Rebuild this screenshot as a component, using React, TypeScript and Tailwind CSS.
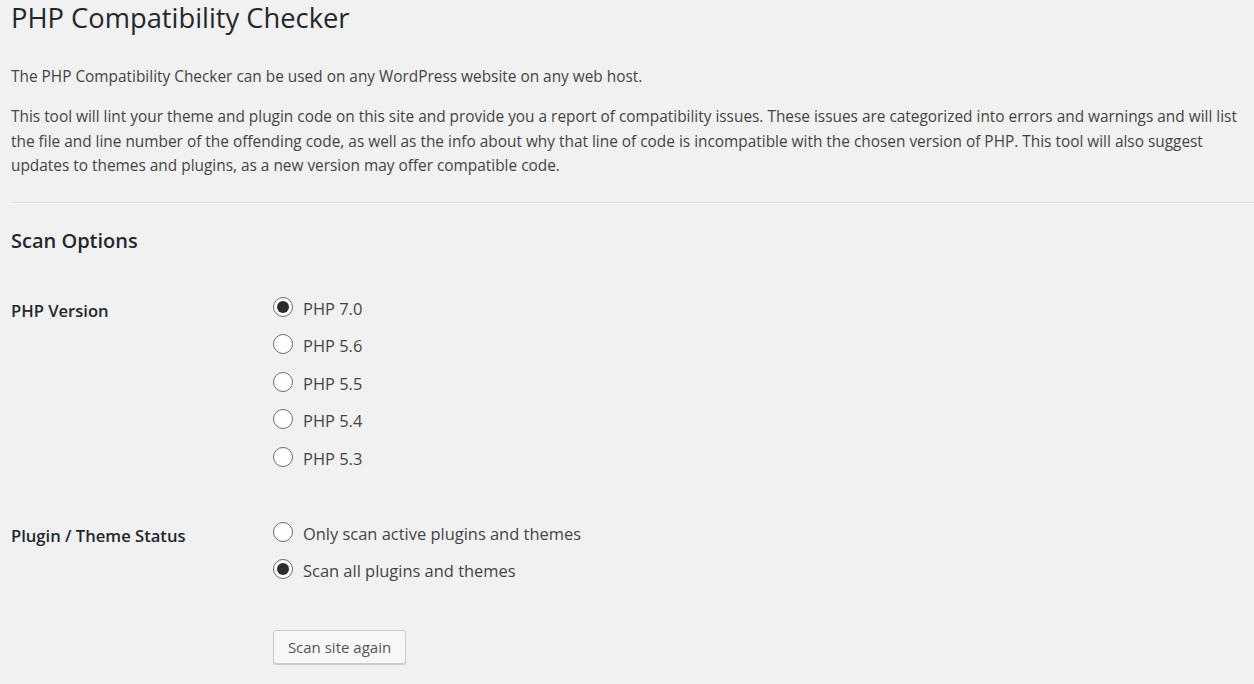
import { useState } from 'react';

const versions = ['PHP 7.0', 'PHP 5.6', 'PHP 5.5', 'PHP 5.4', 'PHP 5.3'];
const statuses = ['Only scan active plugins and themes', 'Scan all plugins and themes'];

function Radio({ label, checked, onSelect }: { label: string; checked: boolean; onSelect: () => void }) {
  return (
    <label className="flex h-[37.5px] cursor-pointer items-center gap-[10px]" onClick={onSelect}>
      <span className="mt-[-4px] flex h-[20px] w-[20px] items-center justify-center rounded-full border border-[#6b6b6b] bg-white">
        {checked && <span className="h-[12px] w-[12px] rounded-full bg-[#2c2c2c]" />}
      </span>
      <span className="text-[16.45px] leading-[24px] text-[#444]">{label}</span>
    </label>
  );
}

export default function App() {
  const [version, setVersion] = useState('PHP 7.0');
  const [status, setStatus] = useState(statuses[1]);

  return (
    <div className="min-h-screen bg-[#f1f1f1] pl-[11px] font-['Open_Sans',sans-serif] text-[#444]">
      <h1 className="text-[27.3px] leading-[36px] font-normal text-[#23282d]">PHP Compatibility Checker</h1>

      <p className="mt-[29px] text-[15.4px] leading-[24.4px]">
        The PHP Compatibility Checker can be used on any WordPress website on any web host.
      </p>
      <p className="mt-[16px] whitespace-nowrap text-[15.4px] leading-[24.5px]">
        This tool will lint your theme and plugin code on this site and provide you a report of compatibility issues. These issues are categorized into errors and warnings and will list
        <br />
        the file and line number of the offending code, as well as the info about why that line of code is incompatible with the chosen version of PHP. This tool will also suggest
        <br />
        updates to themes and plugins, as a new version may offer compatible code.
      </p>

      {/* divider */}
      <div className="mt-[23px] border-t border-b border-t-[#ddd] border-b-white" />

      <h2 className="mt-[23px] text-[20px] leading-[28px] font-semibold text-[#23282d]">Scan Options</h2>

      {/* PHP version */}
      <div className="mt-[35px] flex">
        <div className="w-[262px] pt-[9px] text-[16.6px] leading-[24px] font-semibold text-[#23282d]">PHP Version</div>
        <div className="flex flex-col">
          {versions.map((v) => (
            <Radio key={v} label={v} checked={version === v} onSelect={() => setVersion(v)} />
          ))}
        </div>
      </div>

      {/* Plugin / theme status */}
      <div className="mt-[37.5px] flex">
        <div className="w-[262px] pt-[9px] text-[16.6px] leading-[24px] font-semibold text-[#23282d]">Plugin / Theme Status</div>
        <div className="flex flex-col">
          {statuses.map((s) => (
            <Radio key={s} label={s} checked={status === s} onSelect={() => setStatus(s)} />
          ))}
        </div>
      </div>

      <div className="mt-[40px] pl-[262px]">
        <button className="h-[34px] w-[133px] rounded-[3px] border border-[#ccc] bg-[#f7f7f7] text-[15px] text-[#555] shadow-[0_1px_0_#ccc]">
          Scan site again
        </button>
      </div>
    </div>
  );
}
